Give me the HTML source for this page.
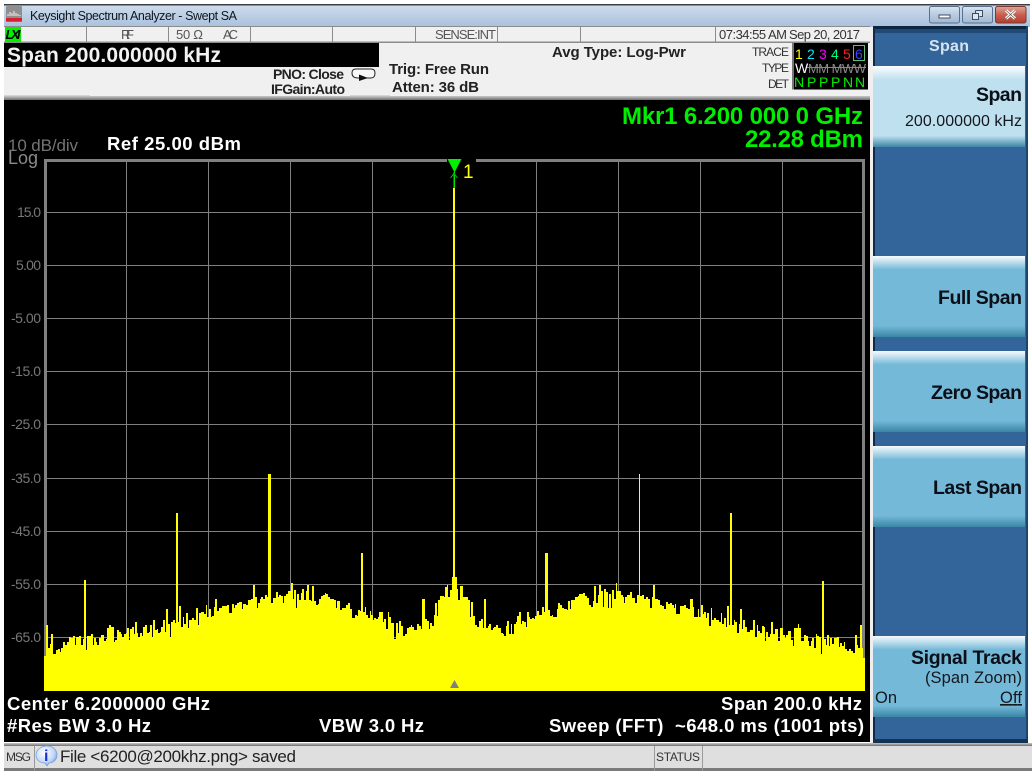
<!DOCTYPE html>
<html><head><meta charset="utf-8"><title>Keysight Spectrum Analyzer - Swept SA</title>
<style>
html,body{margin:0;padding:0;background:#fff;width:1032px;height:776px;overflow:hidden}
svg{display:block}
text{font-family:"Liberation Sans",sans-serif;white-space:pre}
.st{font-size:13px;fill:#555}
.hd{font-size:14px;font-weight:bold;fill:#222}
.tr{font-size:12px;fill:#333}
.yl{font-size:14px;fill:#777}
.bw{font-size:18.5px;font-weight:bold;fill:#fff}
.sk{font-size:19.5px;font-weight:bold;fill:#0a0f18}
.num{font-size:14px}
.det{font-size:14px;fill:#00f000}
</style></head><body>
<svg width="1032" height="776" viewBox="0 0 1032 776" xmlns="http://www.w3.org/2000/svg">
<defs>
<linearGradient id="tb" x1="0" y1="0" x2="0" y2="1"><stop offset="0" stop-color="#cfdcec"/><stop offset="1" stop-color="#a9c1dd"/></linearGradient>
<linearGradient id="wb" x1="0" y1="0" x2="0" y2="1"><stop offset="0" stop-color="#dae5f1"/><stop offset=".5" stop-color="#b9cbdf"/><stop offset="1" stop-color="#a3b9d2"/></linearGradient>
<linearGradient id="cb" x1="0" y1="0" x2="0" y2="1"><stop offset="0" stop-color="#e0a598"/><stop offset=".5" stop-color="#c8604f"/><stop offset="1" stop-color="#b23c2c"/></linearGradient>
<linearGradient id="sk" x1="0" y1="0" x2="0" y2="1"><stop offset="0" stop-color="#f6fbfd"/><stop offset=".17" stop-color="#74b9d8"/><stop offset=".86" stop-color="#74b9d8"/><stop offset="1" stop-color="#3b86a5"/></linearGradient>
<linearGradient id="sel" x1="0" y1="0" x2="0" y2="1"><stop offset="0" stop-color="#fbfdfe"/><stop offset=".17" stop-color="#bfe0ef"/><stop offset=".86" stop-color="#bfe0ef"/><stop offset="1" stop-color="#3b86a5"/></linearGradient>
<linearGradient id="gb" x1="0" y1="0" x2="0" y2="1"><stop offset="0" stop-color="#c8c8c8"/><stop offset="1" stop-color="#707070"/></linearGradient>
<radialGradient id="inf" cx=".4" cy=".35" r=".7"><stop offset="0" stop-color="#ffffff"/><stop offset=".65" stop-color="#c5d8f5"/><stop offset="1" stop-color="#6f9ce0"/></radialGradient>
</defs>

<!-- window chrome -->
<rect x="0" y="0" width="1032" height="776" fill="#fff"/>
<rect x="4" y="5" width="1026" height="22" fill="url(#tb)"/>
<rect x="4" y="4" width="1026" height="1.5" fill="#3a3f45"/>
<rect x="6" y="6" width="16" height="16" rx="1.5" fill="#8f8f8f"/>
<rect x="6" y="18" width="16" height="3.5" fill="#d8202c"/>
<path d="M8 16V14M10 16V12M12 16V13M14 16V11M16 16V13M18 16V14M20 16V15" stroke="#f2f2f2" stroke-width="1"/>
<text x="30" y="20" font-size="12.5" fill="#10161e" textLength="207">Keysight Spectrum Analyzer - Swept SA</text>
<rect x="929.5" y="6.5" width="30" height="16.5" rx="2" fill="url(#wb)" stroke="#56708f"/>
<rect x="939" y="15" width="11" height="3" fill="#fff" stroke="#3c4e63" stroke-width="1"/>
<rect x="962.5" y="6.5" width="30" height="16.5" rx="2" fill="url(#wb)" stroke="#56708f"/>
<path d="M975.5 10.5h7v6h-3M975.5 10.5v3M972.5 13.5h6v6h-6z" fill="#dce6f0" stroke="#3c4e63"/>
<rect x="995.5" y="6.5" width="30.5" height="16.5" rx="2" fill="url(#cb)" stroke="#7c3a30"/>
<path d="M1006 10.5l9 8M1015 10.5l-9 8" stroke="#fff" stroke-width="3"/>
<path d="M1006 10.5l9 8M1015 10.5l-9 8" stroke="#4a4a4a" stroke-width=".6"/>

<!-- status row -->
<rect x="4" y="26" width="866" height="17" fill="#f0f0f0"/>
<rect x="4" y="26" width="866" height="1" fill="#8c8c8c"/>
<rect x="4" y="41.5" width="866" height="1.5" fill="#8c8c8c"/>
<path d="M86.5 27V42M168.5 27V42M250.5 27V42M332.5 27V42M415.5 27V42M497.5 27V42M580.5 27V42M715.5 27V42" stroke="#8c8c8c"/>
<rect x="5" y="27" width="16" height="15" fill="#00f000"/>
<text x="5.5" y="39" font-size="13" font-weight="bold" font-style="italic" fill="#000" textLength="15">LXI</text>
<text class="st" x="121" y="39" textLength="13">RF</text>
<text class="st" x="176" y="39" textLength="27">50 Ω</text>
<text class="st" x="223" y="39" textLength="15">AC</text>
<text class="st" x="435" y="39" textLength="61">SENSE:INT</text>
<text class="st" x="719" y="39" style="fill:#333" textLength="68">07:34:55 AM</text>
<text class="st" x="789" y="39" style="fill:#333" textLength="71">Sep 20, 2017</text>

<!-- header -->
<rect x="4" y="43" width="866" height="55" fill="#f0f0f0"/>
<rect x="4" y="43" width="375" height="24" fill="#000"/>
<rect x="4" y="95" width="86" height="2" fill="#d4d4d4"/>
<rect x="350" y="95" width="40" height="2" fill="#d4d4d4"/>
<rect x="4" y="96" width="866" height="4" fill="url(#gb)"/>
<text x="7" y="62" font-size="21" font-weight="bold" fill="#f2f2f2" textLength="214">Span 200.000000 kHz</text>
<text class="hd" x="273" y="79" textLength="71">PNO: Close</text>
<text class="hd" x="271" y="94" textLength="74">IFGain:Auto</text>
<path d="M356 69H371Q375 69 375 73Q375 78 371 78H358Q352 78 352 73Q352 69 356 69Z" fill="#f8f8f8" stroke="#222" stroke-width="1"/>
<path d="M359 74.5L359 81L368 78Z" fill="#111"/>
<text x="389" y="74" font-size="15" font-weight="bold" fill="#222" textLength="100">Trig: Free Run</text>
<text x="392" y="92" font-size="15" font-weight="bold" fill="#222" textLength="87">Atten: 36 dB</text>
<text x="552" y="57" font-size="15" font-weight="bold" fill="#222" textLength="134">Avg Type: Log-Pwr</text>
<text class="tr" x="752" y="56" textLength="37">TRACE</text>
<text class="tr" x="762" y="72" textLength="27">TYPE</text>
<text class="tr" x="768" y="88" textLength="21">DET</text>
<rect x="792" y="43" width="76" height="46.5" fill="#000"/>
<rect x="792" y="43" width="2" height="46.5" fill="#777"/>
<rect x="853.5" y="45.5" width="11" height="15" fill="none" stroke="#5fc06f"/>
<text class="num" x="795" y="59" fill="#ffff00">1</text>
<text class="num" x="807" y="59" fill="#00e8ff">2</text>
<text class="num" x="819" y="59" fill="#ff00ff">3</text>
<text class="num" x="831" y="59" fill="#00ff80">4</text>
<text class="num" x="843" y="59" fill="#ff2020">5</text>
<text class="num" x="855" y="59" fill="#4040ff">6</text>
<text x="795" y="73" font-size="14" fill="#fff" textLength="13">W</text>
<text x="808" y="73" font-size="13" fill="#8a8a8a" textLength="58">MM MWW</text>
<rect x="807" y="67" width="59" height="1" fill="#8a8a8a"/>
<text class="det" x="794" y="87">N</text>
<text class="det" x="807" y="87">P</text>
<text class="det" x="819" y="87">P</text>
<text class="det" x="831" y="87">P</text>
<text class="det" x="843" y="87">N</text>
<text class="det" x="855" y="87">N</text>

<!-- plot area -->
<rect x="4" y="100" width="866" height="642" fill="#000"/>
<rect x="870" y="27" width="3" height="716" fill="#efefef"/>
<text x="622" y="124" font-size="24" font-weight="bold" fill="#00ee00" textLength="241">Mkr1 6.200 000 0 GHz</text>
<text x="745" y="147" font-size="24" font-weight="bold" fill="#00ee00" textLength="118">22.28 dBm</text>
<text x="8" y="151" font-size="17" fill="#747474" textLength="70">10 dB/div</text>
<text x="8" y="164" font-size="18" fill="#8a8a8a" textLength="30">Log</text>
<text class="bw" x="107" y="150" textLength="134">Ref 25.00 dBm</text>
<text class="yl" x="17" y="217" textLength="24">15.0</text>
<text class="yl" x="16" y="270" textLength="25">5.00</text>
<text class="yl" x="11" y="323" textLength="30">-5.00</text>
<text class="yl" x="11" y="376" textLength="30">-15.0</text>
<text class="yl" x="11" y="429" textLength="30">-25.0</text>
<text class="yl" x="11" y="483" textLength="30">-35.0</text>
<text class="yl" x="11" y="536" textLength="30">-45.0</text>
<text class="yl" x="11" y="589" textLength="30">-55.0</text>
<text class="yl" x="11" y="642" textLength="30">-65.0</text>

<!-- graticule -->
<path d="M47 212.5H862M47 265.5H862M47 318.5H862M47 371.5H862M47 424.5H862M47 478.5H862M47 531.5H862M47 584.5H862M47 637.5H862M126.5 162V691M208.5 162V691M290.5 162V691M372.5 162V691M536.5 162V691M618.5 162V691M700.5 162V691M782.5 162V691" stroke="#808080" stroke-width="1" fill="none"/>
<path d="M44 159H447V162H47V691H44ZM476 159H865V691H862V162H476Z" fill="#808080"/>

<!-- trace -->
<path fill="#ffff00" d="M44 691V656H46V625H48V648H50V644H51V634H53V654H56V650H58V649H60V652H61V648H63V642H65V645H67V642H69V637H71V638H73V636H75V645H76V637H79V636H81V645H83V639H84V580H86V650H87V636H91V634H93V645H94V638H96V642H97V645H99V638H101V635H104V641H106V639H107V628H109V625H111V627H114V642H115V640H117V630H119V632H121V634H122V637H124V634H126V633H127V628H129V640H130V629H132V627H134V634H135V622H137V633H138V637H140V633H142V636H143V627H145V625H147V633H149V632H150V625H152V637H153V620H155V630H157V629H158V633H160V632H161V627H163V620H165V632H166V609H168V624H170V637H171V622H173V620H175V623H176V513H178V622H179V606H181V627H183V617H184V624H186V613H188V628H189V620H192V618H194V620H196V608H198V625H199V613H201V612H204V614H206V605H207V617H209V609H211V617H212V616H214V607H215V599H217V611H219V608H222V606H227V605H229V613H232V604H234V608H235V605H237V603H239V602H242V609H243V604H246V605H248V600H251V599H253V585H255V597H257V608H258V603H260V599H261V597H263V599H265V595H267V597H268V474H271V603H273V598H276V592H278V597H279V595H281V596H283V603H284V596H286V594H288V591H291V583H293V599H294V590H296V608H297V594H299V600H301V593H302V589H304V600H306V591H307V585H309V600H311V601H312V586H314V601H316V605H318V604H319V599H321V596H323V595H325V593H326V594H328V597H330V599H334V600H336V608H337V601H340V610H342V608H346V605H348V603H350V609H352V618H355V615H357V616H358V610H360V611H361V553H363V612H365V607H366V615H368V618H370V611H371V615H373V620H374V618H376V619H378V617H379V612H383V622H384V619H386V629H388V612H389V617H391V623H394V639H396V623H398V633H399V621H401V626H403V636H405V634H407V628H409V627H411V625H412V627H414V630H417V624H419V626H421V629H422V599H425V619H427V621H429V629H430V623H432V626H434V615H435V603H437V616H438V600H440V596H444V597H445V587H447V585H448V597H450V590H452V577H453V188H455V577H457V589H458V600H460V586H463V597H468V600H470V617H471V602H473V616H475V625H477V627H479V621H481V619H483V628H484V599H486V628H488V626H489V624H491V630H493V628H494V627H496V625H498V628H501V633H503V634H504V636H506V626H507V621H509V634H511V624H512V634H514V624H516V622H517V616H519V612H521V624H522V621H524V622H526V627H527V612H529V617H530V619H532V618H534V619H535V616H537V611H539V615H542V607H544V612H545V553H548V610H550V616H552V615H553V617H557V609H558V603H560V605H562V608H564V609H567V610H568V601H570V609H571V600H575V597H578V596H579V594H583V593H585V596H587V598H589V605H591V607H593V601H594V586H596V603H598V595H599V585H601V591H603V607H604V589H606V592H608V608H609V594H611V608H612V590H614V599H616V583H617V591H621V595H623V597H624V603H625V597H627V595H630V592H632V598H635V603H637V595H639V474H640V596H642V595H644V599H646V597H648V599H650V608H652V597H653V585H655V599H658V600H660V605H662V606H664V609H666V602H668V604H670V603H672V605H674V608H675V604H676V614H680V606H684V605H686V608H688V609H690V599H693V607H694V617H698V609H699V617H701V605H703V614H704V612H706V618H707V613H709V626H711V608H712V620H714V618H716V620H719V622H721V613H722V624H724V618H726V627H727V606H729V625H730V513H732V625H734V620H735V622H737V633H739V624H740V609H742V629H743V620H745V627H747V632H750V630H753V620H755V637H757V625H758V631H760V633H762V626H764V627H765V641H766V632H768V637H770V634H771V622H773V634H775V629H778V641H780V628H783V635H785V638H786V635H788V631H791V640H793V646H794V628H798V624H799V628H801V641H804V635H806V636H808V641H809V646H811V641H812V638H814V648H816V634H817V636H819V637H821V654H822V581H824V639H826V645H827V635H829V646H830V638H832V644H834V638H837V637H839V647H840V643H842V646H844V642H845V649H847V651H849V649H851V651H853V653H855V635H857V645H858V648H860V625H862V648H863V658H865V691Z"/>

<!-- marker -->
<rect x="453.5" y="172" width="1.5" height="16" fill="#00e000"/>
<path d="M450.5 178L454 173.5L457.5 178" fill="none" stroke="#00c000" stroke-width="1"/>
<path d="M447.5 159H461.5L454.5 172.5Z" fill="#00f000"/>
<text x="463" y="178" font-size="19" fill="#ffff00">1</text>
<path d="M450 688L454.5 680L459 688Z" fill="#808080"/>

<!-- bottom annotations -->
<text class="bw" x="7" y="710" textLength="203">Center 6.2000000 GHz</text>
<text class="bw" x="7" y="732" textLength="144">#Res BW 3.0 Hz</text>
<text class="bw" x="319" y="732" textLength="105">VBW 3.0 Hz</text>
<text class="bw" x="721" y="710" textLength="141">Span 200.0 kHz</text>
<text class="bw" x="549" y="732" textLength="315">Sweep (FFT)  ~648.0 ms (1001 pts)</text>

<!-- softkey panel -->
<rect x="873" y="26" width="155" height="717" fill="#34659a"/>
<rect x="873" y="26" width="155" height="3" fill="#0d2640"/>
<rect x="873" y="29" width="155" height="4" fill="#204a75"/>
<rect x="873" y="26" width="2" height="717" fill="#0f2b49"/>
<rect x="1026" y="26" width="2" height="717" fill="#1d466f"/>
<rect x="873" y="739" width="155" height="4" fill="#143352"/>
<text x="929" y="51" font-size="16" font-weight="bold" fill="#d6e4f0" textLength="40">Span</text>
<rect x="873" y="66" width="152" height="81" fill="url(#sel)"/>
<rect x="873" y="256" width="152" height="81" fill="url(#sk)"/>
<rect x="873" y="351" width="152" height="81" fill="url(#sk)"/>
<rect x="873" y="446" width="152" height="81" fill="url(#sk)"/>
<rect x="873" y="636" width="152" height="81" fill="url(#sk)"/>
<text class="sk" x="976" y="101" textLength="46">Span</text>
<text x="905" y="126" font-size="16" fill="#14181e" textLength="117">200.000000 kHz</text>
<text class="sk" x="938" y="304" textLength="84">Full Span</text>
<text class="sk" x="931" y="399" textLength="91">Zero Span</text>
<text class="sk" x="933" y="494" textLength="89">Last Span</text>
<text class="sk" x="911" y="664" textLength="111">Signal Track</text>
<text x="925" y="683" font-size="16.5" fill="#14181e" textLength="97">(Span Zoom)</text>
<text x="875" y="703" font-size="16.5" fill="#14181e" textLength="22">On</text>
<text x="1000" y="703" font-size="16.5" fill="#14181e" text-decoration="underline" textLength="22">Off</text>

<!-- message bar -->
<rect x="4" y="743" width="1028" height="3" fill="url(#gb)"/>
<rect x="4" y="746" width="1028" height="22" fill="#dfdfdf"/>
<rect x="4" y="768" width="1028" height="3" fill="#7a7a7a"/>
<path d="M34.5 746V771M654.5 746V771M702.5 746V771" stroke="#9a9a9a"/>
<text x="6" y="761" font-size="12" fill="#333" textLength="25">MSG</text>
<path d="M47 746C53 746 57 750 57 755C57 760 53 763 49 763L47 766L45 763C40 763 36 760 36 755C36 750 41 746 47 746Z" fill="url(#inf)" stroke="#6f9ce0" stroke-width=".7"/>
<text x="44" y="761" font-size="16" font-weight="bold" fill="#1a30d8">i</text>
<text x="60" y="762" font-size="17" fill="#222" textLength="236">File &lt;6200@200khz.png&gt; saved</text>
<text x="656" y="761" font-size="12" fill="#333" textLength="44">STATUS</text>
</svg>
</body></html>
